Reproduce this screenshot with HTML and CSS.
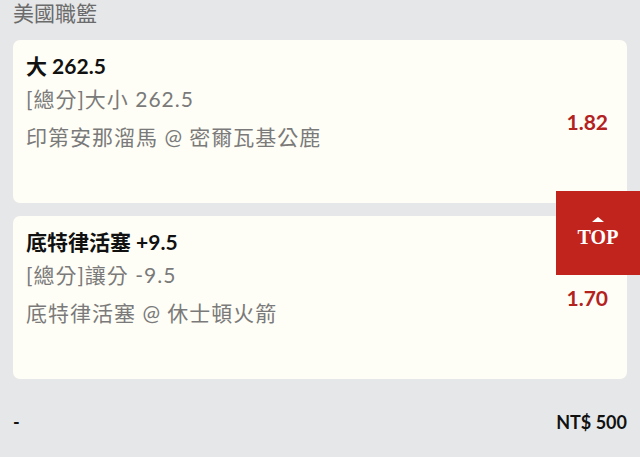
FILE: index.html
```html
<!DOCTYPE html>
<html lang="zh-Hant">
<head>
<meta charset="utf-8">
<link rel="stylesheet" href="styles.css">
</head>
<body>
<div class="page">
  <div class="league">美國職籃</div>
  <div class="card">
    <div class="info">
      <div class="title">大 262.5</div>
      <div class="line">[總分]大小 262.5</div>
      <div class="line">印第安那溜馬 @ 密爾瓦基公鹿</div>
    </div>
    <div class="odds">1.82</div>
  </div>
  <div class="card">
    <div class="info">
      <div class="title">底特律活塞 +9.5</div>
      <div class="line">[總分]讓分 -9.5</div>
      <div class="line">底特律活塞 @ 休士頓火箭</div>
    </div>
    <div class="odds">1.70</div>
  </div>
  <div class="footer">
    <span class="dash">-</span>
    <span class="amount">NT$ 500</span>
  </div>
</div>
<div class="top-btn">
  <span class="arrow"></span>
  <span class="top-text">TOP</span>
</div>
</body>
</html>
```

FILE: styles.css
```css
html, body {
  margin: 0;
  padding: 0;
  background: #e6e7e9;
}
body {
  font-family: "Lato", "Noto Sans CJK TC", sans-serif;
  overflow: hidden;
}
.page {
  padding: 0 13px;
}
.league {
  font-size: 21px;
  line-height: 26px;
  color: #6b6b6b;
  margin-bottom: 14px;
}
.card {
  background: #fffef6;
  border-radius: 7px;
  display: flex;
  align-items: center;
  padding: 12px 19px 40px 13px;
  margin-bottom: 13px;
  height: 163px;
  box-sizing: border-box;
}
.info {
  flex: 1;
  align-self: flex-start;
}
.title {
  font-size: 21px;
  font-weight: 700;
  line-height: 28px;
  color: #111;
}
.line {
  font-size: 21px;
  line-height: 38px;
  color: #7a7a7a;
  letter-spacing: 1px;
}
.odds {
  font-size: 21px;
  font-weight: 700;
  color: #b3221f;
  margin-top: 28px;
}
.footer {
  display: flex;
  justify-content: space-between;
  margin-top: 30px;
  line-height: 26px;
  font-size: 18px;
  font-weight: 700;
  color: #111;
}
.top-btn {
  position: fixed;
  right: 0;
  top: 191px;
  width: 84px;
  height: 84px;
  background: #c0241c;
  display: flex;
  flex-direction: column;
  align-items: center;
  padding-top: 26px;
  box-sizing: border-box;
}
.arrow {
  width: 0;
  height: 0;
  border-left: 6px solid transparent;
  border-right: 6px solid transparent;
  border-bottom: 5px solid #fff;
}
.top-text {
  font-family: "Liberation Serif", serif;
  font-weight: 700;
  font-size: 20px;
  line-height: 20px;
  color: #fff;
  margin-top: 5px;
}
```
